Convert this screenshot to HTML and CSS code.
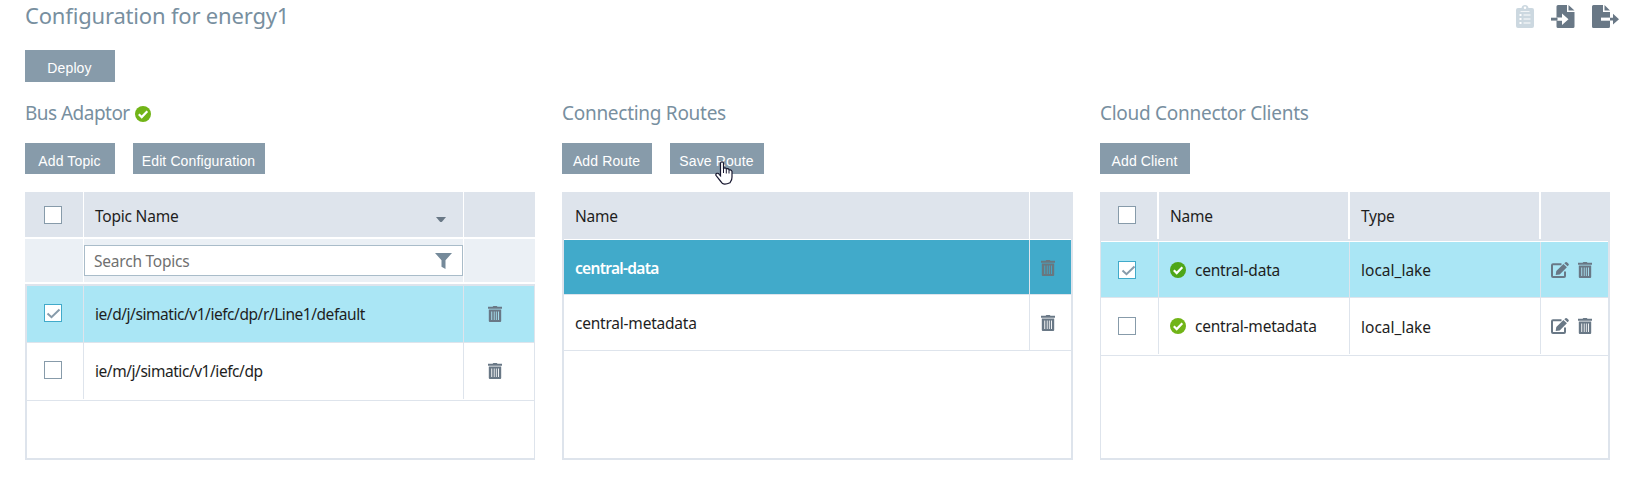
FILE: index.html
```html
<!DOCTYPE html>
<html lang="en">
<head>
<meta charset="utf-8">
<title>Configuration for energy1</title>
<link rel="stylesheet" href="styles.css">
</head>
<body>
<svg class="defs" width="0" height="0" aria-hidden="true">
  <symbol id="trash" viewBox="0 0 14 16"><path fill-rule="evenodd" d="M4.7 .7Q4.9 0 5.500 0H8.700Q9.200 0 9.400 .7H14V2.700H0V.7ZM.8 3.500H13.200V15Q13.200 16 12.200 16H1.800Q.8 16 .8 15ZM3.300 5.500V14H4.200V5.500ZM5.800 5.500V14H6.600V5.500ZM7.900 5.500V14H8.700V5.500ZM10 5.500V14H10.900V5.500Z"/></symbol>
  <symbol id="edit" viewBox="0 0 18 16"><path d="M10.500 2.200H2Q1 2.200 1 3.200V14Q1 15 2 15H13Q14 15 14 14V9.500" fill="none" stroke="currentColor" stroke-width="2"/><path d="M5.300 9.100 12.400 1.900 15.900 5.200 8.700 12.400 4.700 13ZM13.300 1.300 14.400.3Q15.300-.3 16.200.4L17.500 1.700Q18.200 2.500 17.500 3.300L16.600 4.300Z"/></symbol>
  <symbol id="ok" viewBox="0 0 16 16"><circle cx="8" cy="8" r="8"/><path d="M3.800 8.300 6.700 11.100 12.300 5.300" fill="none" stroke="#fff" stroke-width="2.200"/></symbol>
  <symbol id="tick" viewBox="0 0 16 16"><path d="M2.500 8.500 6.500 12.200 14.500 4.500" fill="none" stroke="currentColor" stroke-width="2"/></symbol>
</svg>
<header class="top">
  <h1>Configuration for energy1</h1>
  <div class="tools">
    <svg class="tool off" width="18" height="23" viewBox="0 0 18 23"><path fill-rule="evenodd" d="M2 3H5.500Q6 0 9 0T12.500 3H16Q18 3 18 5V21Q18 23 16 23H2Q0 23 0 21V5Q0 3 2 3ZM9 1.500A1.300 1.300 0 0 0 9 4.100 1.300 1.300 0 0 0 9 1.500ZM4.500 6V6.800H13.500V6ZM3.500 9V11H5.500V9ZM7.500 9.400V10.500H14.500V9.400ZM3.500 13V15H5.500V13ZM7.500 13.400V14.500H14.500V13.400ZM3.500 17V19H5.500V17ZM7.500 17.400V18.500H14.500V17.400Z"/></svg>
    <svg class="tool" width="24" height="23" viewBox="0 0 24 23"><path d="M7 0H16V7H23.500V21.500Q23.500 23 22 23H7Q5.500 23 5.500 21.500V1.500Q5.500 0 7 0ZM17.500 0 23.500 5.500H17.500Z"/><path d="M5.500 12.600H11V8.500L17.500 14.200 11 20V15.700H5.500Z" fill="#fff"/><path d="M0 12.700H6.500V15.600H0Z"/></svg>
    <svg class="tool" width="27" height="23" viewBox="0 0 27 23"><path d="M1.500 0H11V7H18V21.500Q18 23 16.500 23H1.500Q0 23 0 21.500V1.500Q0 0 1.500 0ZM12.500 0 18 5.500H12.500Z"/><path d="M9 12.600H18V15.700H9Z" fill="#fff"/><path d="M18 12.700H21V8.800L27 14.200 21 19.600V15.600H18Z"/></svg>
  </div>
</header>
<button class="btn deploy">Deploy</button>
<main class="panels">
  <section>
    <h2 class="tight">Bus Adaptor <svg class="ok" width="16" height="16"><use href="#ok"/></svg></h2>
    <div class="actions"><button class="btn">Add Topic</button><button class="btn wide">Edit Configuration</button></div>
    <div class="table topics">
      <div class="row head">
        <div class="cell pick"><i class="box"></i></div>
        <div class="cell">Topic Name<svg class="sort" width="10" height="6"><path d="M0 0H10L6 4.700Q5 5.500 4 4.700Z"/></svg></div>
        <div class="cell"></div>
      </div>
      <div class="row filter">
        <div class="cell"></div>
        <div class="cell"><div class="search"><span>Search Topics</span><svg width="17" height="16"><path d="M0 0H17L10.500 7.200V16L6.500 13.800V7.200Z"/></svg></div></div>
        <div class="cell"></div>
      </div>
      <div class="row selected first">
        <div class="cell pick"><i class="box on"><svg width="16" height="16"><use href="#tick"/></svg></i></div>
        <div class="cell path">ie/d/j/simatic/v1/iefc/dp/r/Line1/default</div>
        <div class="cell act"><svg width="14" height="16"><use href="#trash"/></svg></div>
      </div>
      <div class="row second">
        <div class="cell pick"><i class="box"></i></div>
        <div class="cell path">ie/m/j/simatic/v1/iefc/dp</div>
        <div class="cell act"><svg width="14" height="16"><use href="#trash"/></svg></div>
      </div>
    </div>
  </section>
  <section>
    <h2>Connecting Routes</h2>
    <div class="actions"><button class="btn">Add Route</button><button class="btn save">Save Route<svg class="hand" width="18" height="24" viewBox="0 0 18 24"><path d="M5.500 2.200Q5.500 .8 7 .8T8.500 2.200V8Q8.700 6.700 10 6.800T11.300 8.100V8.600Q11.600 7.500 12.800 7.700T14 9V9.600Q14.400 8.600 15.500 8.900T17 10.400V16Q17 19 15.600 20.600L15 21.800Q10 24 7.500 22.600L5.400 20 .9 14.300Q.5 12.600 2 12.300T4.200 13.300L5.500 14.700Z" fill="#fff" stroke="#181830" stroke-width="1.200"/><path d="M8.500 8V12M11.300 8.500V12.500M14 9.500V12.500" stroke="#181830"/></svg></button></div>
    <div class="table routes">
      <div class="row head"><div class="cell">Name</div><div class="cell"></div></div>
      <div class="row active first"><div class="cell">central-data</div><div class="cell act"><svg width="14" height="16"><use href="#trash"/></svg></div></div>
      <div class="row second"><div class="cell">central-metadata</div><div class="cell act"><svg width="14" height="16"><use href="#trash"/></svg></div></div>
    </div>
  </section>
  <section>
    <h2>Cloud Connector Clients</h2>
    <div class="actions"><button class="btn">Add Client</button></div>
    <div class="table clients">
      <div class="row head"><div class="cell pick"><i class="box"></i></div><div class="cell">Name</div><div class="cell">Type</div><div class="cell"></div></div>
      <div class="row selected first">
        <div class="cell pick"><i class="box on shift"><svg width="16" height="16"><use href="#tick"/></svg></i></div>
        <div class="cell"><svg class="ok dark" width="16" height="16"><use href="#ok"/></svg>central-data</div>
        <div class="cell type">local_lake</div>
        <div class="cell act"><svg width="18" height="16"><use href="#edit"/></svg><svg width="14" height="16"><use href="#trash"/></svg></div>
      </div>
      <div class="row second">
        <div class="cell pick"><i class="box"></i></div>
        <div class="cell"><svg class="ok" width="16" height="16"><use href="#ok"/></svg>central-metadata</div>
        <div class="cell type">local_lake</div>
        <div class="cell act"><svg width="18" height="16"><use href="#edit"/></svg><svg width="14" height="16"><use href="#trash"/></svg></div>
      </div>
    </div>
  </section>
</main>
</body>
</html>
```
FILE: styles.css
```css
* { box-sizing: border-box; }
body {
  margin: 0;
  padding: 0 39px 0 25px;
  height: 488px;
  overflow: hidden;
  background: #fff;
  color: #1e1e1e;
  font: 15.5px/20px "Noto Sans", sans-serif;
  letter-spacing: -.22px;
}
svg { fill: currentColor; flex: none; }
.defs { position: absolute; }
.top { display: flex; justify-content: space-between; height: 50px; }
h1, h2 { margin: 0; font-weight: 400; color: #788f9f; }
h1 { font-size: 22px; line-height: 30px; letter-spacing: -.18px; }
h2 { display: flex; align-items: center; gap: 5px; height: 30px; font-size: 19px; line-height: 30px; letter-spacing: -.28px; }
.tight { letter-spacing: -.53px; }
.tight .ok { margin-top: 1px; }
.tools { display: flex; gap: 17px; padding-top: 5px; margin-right: -9px; color: #697886; }
.tool.off { color: #ccd8e0; }
.btn {
  display: block;
  position: relative;
  width: 90px;
  height: 31px;
  padding: 5px 1px 0 0;
  border: 0;
  background: #879baa;
  color: #fff;
  font: 14px/20px "Liberation Sans", sans-serif;
  letter-spacing: .12px;
}
.deploy { height: 32px; padding-top: 4px; }
.wide { width: 132px; }
.save { width: 94px; }
.hand { position: absolute; left: 45px; top: 18px; }
.panels { display: grid; grid-template-columns: 510px 511px 510px; gap: 27px; padding-top: 16px; }
.actions { display: flex; gap: 18px; padding-top: 15px; margin-bottom: 18px; }
.table { height: 268px; border: solid #dee4ec; border-width: 0 1px 2px 2px; }
.row { display: grid; grid-template-columns: var(--cols); border-bottom: 1px solid #dee4ec; }
.cell { display: flex; align-items: center; padding-left: 11px; border-left: 1px solid #dee4ec; min-width: 0; white-space: nowrap; }
.cell:first-child { border-left: 0; }
.head { background: #dee4ec; border-bottom: 0; }
.head .cell { border-color: #fff; }
.selected { background: #aae6f5; }
.active { background: #41aaca; color: #fff; font-weight: 600; letter-spacing: -.7px; }
.act { color: #697886; }
.box { width: 18px; height: 18px; border: 1px solid #879baa; background: #fff; color: #879baa; display: block; }
.box.on { border-color: #41aaca; }
.box svg { display: block; }
.box.shift svg { margin-left: 1px; }
.ok { color: #71b417; }
.ok.dark { color: #4ea619; }

.topics { --cols: 56px 380px 71px; }
.topics .head { height: 45px; margin: 0 -1px 0 0; }
.topics .pick { padding: 0 0 2px 17px; }
.topics .head .cell { padding-top: 3px; }
.topics .head .pick { padding: 2px 0 1px 17px; }
.path { letter-spacing: -.45px; }
.sort { margin: 7px 17px 0 auto; color: #697886; }
.topics .filter { height: 49px; margin: 0 -1px 0 -2px; padding-left: 2px; border-top: 2px solid #fff; border-bottom: 2px solid #dee4ec; background: linear-gradient(#ebf0f5 43px, #fff 43px); }
.filter .cell { padding: 0; align-items: flex-start; border-color: #fff; }
.search { display: flex; justify-content: space-between; align-items: center; width: 379px; height: 31px; margin-top: 6px; padding: 0 10px 0 9px; border: 1px solid #a9bcc9; background: #fff; color: #707070; }
.search svg { color: #758a9a; }
.topics .first { height: 57px; }
.topics .second { height: 58px; padding-bottom: 1px; }
.topics .act { padding-left: 24px; }

.routes { --cols: 465px 42px; border-right-width: 2px; }
.routes .head { height: 47px; }
.routes .first { height: 56px; border-top: 1px solid #fff; }
.routes .first .cell:first-child { padding-top: 2px; }
.routes .second { height: 56px; }
.routes .act { padding-left: 11px; }
.routes .active .act { color: #69777f; padding-top: 1px; }

.clients { --cols: 57px 191px 191px 68px; border-width: 0 2px 2px 1px; }
.clients .head { height: 49px; padding-bottom: 2px; }
.clients .head .cell { border-width: 0 0 0 2px; margin-left: -1px; padding-top: 1px; }
.clients .head .pick { border: 0; margin: 0; padding: 0 0 1px 17px; }
.clients .pick { padding: 0 0 0 17px; }
.clients .first { height: 57px; border-top: 1px solid #fff; }
.clients .second { height: 58px; padding-bottom: 1px; }
.clients .ok { margin-right: 9px; }
.clients .type { letter-spacing: 0; padding-top: 1px; }
.clients .act { padding-left: 10px; gap: 9px; }
```
